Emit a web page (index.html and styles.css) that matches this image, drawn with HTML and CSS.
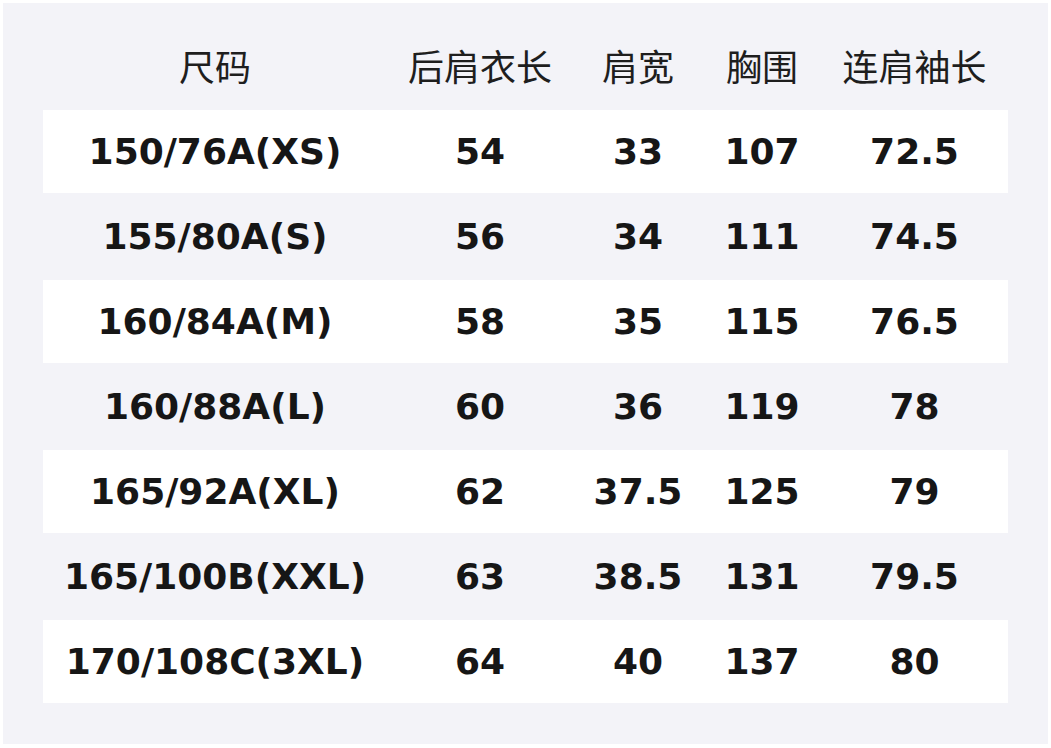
FILE: index.html
```html
<!DOCTYPE html>
<html lang="zh">
<head>
<meta charset="utf-8">
<link rel="stylesheet" href="styles.css">
</head>
<body>
<div class="frame">
  <div class="table">
    <div class="row head">
      <div class="c c1">尺码</div><div class="c c2">后肩衣长</div><div class="c c3">肩宽</div><div class="c c4">胸围</div><div class="c c5">连肩袖长</div>
    </div>
    <div class="row odd">
      <div class="c c1">150/76A(XS)</div><div class="c c2">54</div><div class="c c3">33</div><div class="c c4">107</div><div class="c c5">72.5</div>
    </div>
    <div class="row">
      <div class="c c1">155/80A(S)</div><div class="c c2">56</div><div class="c c3">34</div><div class="c c4">111</div><div class="c c5">74.5</div>
    </div>
    <div class="row odd">
      <div class="c c1">160/84A(M)</div><div class="c c2">58</div><div class="c c3">35</div><div class="c c4">115</div><div class="c c5">76.5</div>
    </div>
    <div class="row">
      <div class="c c1">160/88A(L)</div><div class="c c2">60</div><div class="c c3">36</div><div class="c c4">119</div><div class="c c5">78</div>
    </div>
    <div class="row odd">
      <div class="c c1">165/92A(XL)</div><div class="c c2">62</div><div class="c c3">37.5</div><div class="c c4">125</div><div class="c c5">79</div>
    </div>
    <div class="row">
      <div class="c c1">165/100B(XXL)</div><div class="c c2">63</div><div class="c c3">38.5</div><div class="c c4">131</div><div class="c c5">79.5</div>
    </div>
    <div class="row odd">
      <div class="c c1">170/108C(3XL)</div><div class="c c2">64</div><div class="c c3">40</div><div class="c c4">137</div><div class="c c5">80</div>
    </div>
  </div>
</div>
</body>
</html>
```
FILE: styles.css
```css
html, body {
  margin: 0;
  padding: 0;
  background: #ffffff;
}
body {
  padding: 3px 3px 4px 3px;
}
.frame {
  background: #f3f3f8;
  height: 741px;
  box-sizing: border-box;
  padding: 22px 40px 0 40px;
}
.table {
  display: flex;
  flex-direction: column;
  gap: 2px;
}
.row {
  display: grid;
  grid-template-columns: 344px 186px 130px 118px 187px;
  height: 83px;
  align-items: center;
  font-family: "DejaVu Sans", sans-serif;
  font-weight: bold;
  font-size: 36px;
  color: #161616;
}
.row.odd {
  background: #ffffff;
}
.row.head {
  font-family: "Noto Sans CJK SC", "Noto Sans", sans-serif;
  font-weight: normal;
  font-size: 36px;
  color: #1e1e1e;
  box-sizing: border-box;
  padding-bottom: 4px;
}
.c {
  text-align: center;
  white-space: nowrap;
}
```
